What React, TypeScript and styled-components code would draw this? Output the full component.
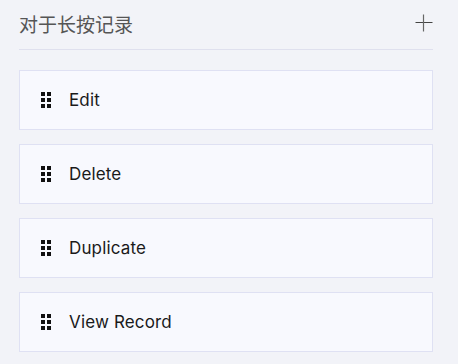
import React from "react";
import styled, { createGlobalStyle } from "styled-components";

const Global = createGlobalStyle`
  html, body {
    margin: 0;
    padding: 0;
    background: #f2f3f8;
  }
  body {
    font-family: "Inter", "Noto Sans CJK SC", sans-serif;
  }
`;

const Panel = styled.div`
  width: 414px;
  margin-left: 19px;
  display: flex;
  flex-direction: column;
`;

const Header = styled.div`
  height: 49px;
  display: flex;
  align-items: center;
  justify-content: space-between;
  border-bottom: 1px solid #dfe0ee;
`;

const Title = styled.div`
  font-family: "Noto Sans CJK SC", sans-serif;
  font-size: 19px;
  color: #555555;
  line-height: 24px;
  margin-top: -2px;
`;

const AddButton = styled.button`
  width: 18px;
  height: 18px;
  padding: 0;
  border: none;
  background: transparent;
  display: flex;
  align-items: center;
  justify-content: center;
  margin-top: -4px;
  cursor: pointer;
`;

const List = styled.div`
  display: flex;
  flex-direction: column;
  gap: 14px;
  margin-top: 20px;
`;

const Item = styled.div`
  height: 58px;
  border: 1px solid #dfe1f3;
  background: #f8f9fe;
  display: flex;
  align-items: center;
  padding-left: 21px;
  gap: 18px;
`;

const Handle = styled.div`
  display: grid;
  grid-template-columns: 4px 4px;
  grid-template-rows: 4px 4px 4px;
  column-gap: 1.5px;
  row-gap: 2px;
  width: 10px;
`;

const Dot = styled.span`
  display: block;
  width: 4px;
  height: 4px;
  background: #111;
`;

const Label = styled.span`
  font-family: "Inter", sans-serif;
  font-size: 17px;
  color: #1a1a1a;
  letter-spacing: 0.15px;
`;

const items = ["Edit", "Delete", "Duplicate", "View Record"];

export default function App() {
  return (
    <>
      <Global />
      <Panel>
        <Header>
          <Title>对于长按记录</Title>
          <AddButton aria-label="add">
            <svg width="18" height="18" viewBox="0 0 18 18">
              <line x1="0.5" y1="8.5" x2="17.5" y2="8.5" stroke="#444" strokeWidth="1" />
              <line x1="8.5" y1="0.5" x2="8.5" y2="17.5" stroke="#666" strokeWidth="1.2" />
            </svg>
          </AddButton>
        </Header>
        <List>
          {items.map((t) => (
            <Item key={t}>
              <Handle>
                {Array.from({ length: 6 }).map((_, i) => (
                  <Dot key={i} />
                ))}
              </Handle>
              <Label>{t}</Label>
            </Item>
          ))}
        </List>
      </Panel>
    </>
  );
}
